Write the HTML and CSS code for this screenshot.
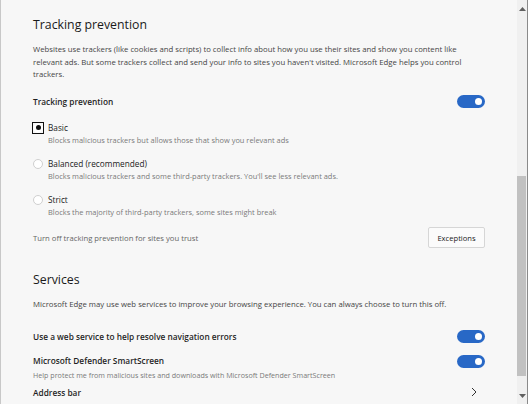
FILE: index.html
```html
<!DOCTYPE html>
<html lang="en">
<head>
<meta charset="utf-8">
<title>Tracking prevention</title>
<link rel="stylesheet" href="styles.css">
</head>
<body>
<div class="window">
  <main class="content">
    <section class="section">
      <h2 class="heading">Tracking prevention</h2>
      <p class="desc">Websites use trackers (like cookies and scripts) to collect info about how you use their sites and show you content like relevant ads. But some trackers collect and send your info to sites you haven't visited. Microsoft Edge helps you control trackers.</p>
      <div class="row row-tp">
        <span class="label">Tracking prevention</span>
        <span class="toggle"><span class="knob"></span></span>
      </div>
      <div class="options">
        <div class="option">
          <span class="radio-wrap focused"><span class="radio checked"></span></span>
          <div class="option-text">
            <div class="option-title">Basic</div>
            <div class="option-sub">Blocks malicious trackers but allows those that show you relevant ads</div>
          </div>
        </div>
        <div class="option">
          <span class="radio-wrap"><span class="radio"></span></span>
          <div class="option-text">
            <div class="option-title">Balanced (recommended)</div>
            <div class="option-sub">Blocks malicious trackers and some third-party trackers. You'll see less relevant ads.</div>
          </div>
        </div>
        <div class="option">
          <span class="radio-wrap"><span class="radio"></span></span>
          <div class="option-text">
            <div class="option-title">Strict</div>
            <div class="option-sub">Blocks the majority of third-party trackers, some sites might break</div>
          </div>
        </div>
      </div>
      <div class="row row-exc">
        <span class="muted">Turn off tracking prevention for sites you trust</span>
        <button class="btn">Exceptions</button>
      </div>
    </section>
    <section class="section services">
      <h2 class="heading">Services</h2>
      <p class="desc single">Microsoft Edge may use web services to improve your browsing experience. You can always choose to turn this off.</p>
      <div class="row row-svc">
        <span class="label">Use a web service to help resolve navigation errors</span>
        <span class="toggle"><span class="knob"></span></span>
      </div>
      <div class="row row-def">
        <div>
          <div class="label">Microsoft Defender SmartScreen</div>
          <div class="def-sub">Help protect me from malicious sites and downloads with Microsoft Defender SmartScreen</div>
        </div>
        <span class="toggle"><span class="knob"></span></span>
      </div>
      <div class="row row-addr">
        <span class="label">Address bar</span>
        <svg class="chev" width="6" height="10" viewBox="0 0 6 10"><path d="M1 1l4 4-4 4" fill="none" stroke="#333" stroke-width="1"/></svg>
      </div>
    </section>
  </main>
  <div class="scrollbar">
    <div class="arrow up"><svg width="7" height="4" viewBox="0 0 7 4"><path d="M0 4L3.5 0 7 4z" fill="#606060"/></svg></div>
    <div class="track">
      <div class="track-space"></div>
      <div class="thumb"></div>
      <div class="track-end"></div>
    </div>
    <div class="arrow down"><svg width="7" height="4" viewBox="0 0 7 4"><path d="M0 0h7L3.5 4z" fill="#606060"/></svg></div>
  </div>
</div>
</body>
</html>
```
FILE: styles.css
```css
* { box-sizing: border-box; }
html, body { margin: 0; padding: 0; height: 100%; }
body {
  background: #f7f7f7;
  font-family: "Open Sans", "Noto Sans", sans-serif;
  color: #1b1b1b;
  overflow: hidden;
}
.window {
  display: flex;
  height: 404px;
  border-left: 1px solid #c8c8c8;
  border-right: 1px solid #8a8a8a;
}
.content {
  flex: 1;
  padding: 13px 31px 0 32px;
  overflow: hidden;
}
.heading {
  margin: 0;
  font-size: 12.3px;
  line-height: 24px;
  font-weight: 400;
  color: #1a1a1a;
}
.desc {
  margin: 6px 0 0;
  font-size: 7.75px;
  line-height: 12.5px;
  color: #454545;
}
.row {
  display: flex;
  align-items: center;
  justify-content: space-between;
}
.label {
  font-size: 8.3px;
  font-weight: 600;
  color: #1f1f1f;
  line-height: 13px;
}
.row-tp { height: 24px; margin-top: 9px; }
.toggle {
  width: 28px;
  height: 13px;
  border-radius: 7px;
  background: #2868c6;
  display: flex;
  align-items: center;
  justify-content: flex-end;
  padding-right: 3px;
  margin-right: 1px;
  flex-shrink: 0;
}
.knob {
  width: 7px;
  height: 7px;
  border-radius: 50%;
  background: #fff;
}
.options { margin-top: 8px; display: flex; flex-direction: column; gap: 11px; }
.option { display: flex; align-items: flex-start; gap: 4px; }
.radio-wrap {
  width: 12px;
  height: 12px;
  margin-left: -1px;
  display: flex;
  align-items: center;
  justify-content: center;
  border: 1.5px solid transparent;
}
.radio-wrap.focused { border-color: #111; }
.radio {
  width: 10px;
  height: 10px;
  border-radius: 50%;
  border: 1px solid #cfcfcf;
  background: #fff;
  display: flex;
  align-items: center;
  justify-content: center;
}
.radio.checked { border-color: #fff; }
.radio.checked::after {
  content: "";
  width: 5px;
  height: 5px;
  border-radius: 50%;
  background: #111;
}
.option-title {
  font-size: 8.25px;
  line-height: 12.5px;
  color: #222;
}
.option-sub {
  font-size: 7.45px;
  line-height: 12.5px;
  color: #7a7a7a;
}
.def-sub {
  font-size: 7.15px;
  line-height: 12px;
  color: #7a7a7a;
  margin-top: 2px;
}
.muted { font-size: 7.7px; color: #666; }
.row-exc { margin-top: 8px; height: 22px; }
.btn {
  width: 57px;
  height: 21px;
  border: 1px solid #d6d6d6;
  border-radius: 2px;
  background: #fbfbfb;
  font-family: inherit;
  font-size: 7.6px;
  color: #1a1a1a;
  padding: 0;
  margin-right: 1px;
}
.services { margin-top: 19px; }
.row-svc { margin-top: 19px; height: 14px; }
.row-def { margin-top: 11px; align-items: flex-start; }
.row-def .toggle { margin-top: 1px; }
.row-addr { margin-top: 4px; height: 14px; }
.chev { margin-right: 9px; }
.scrollbar {
  width: 10px;
  background: #f0f0f0;
  display: flex;
  flex-direction: column;
}
.arrow {
  height: 17px;
  display: flex;
  align-items: center;
  justify-content: center;
}
.track { flex: 1; display: flex; flex-direction: column; }
.track-space { height: 159px; }
.thumb { height: 200px; background: #c1c1c1; margin-right: 1px; }
.track-end { flex: 1; }
```
